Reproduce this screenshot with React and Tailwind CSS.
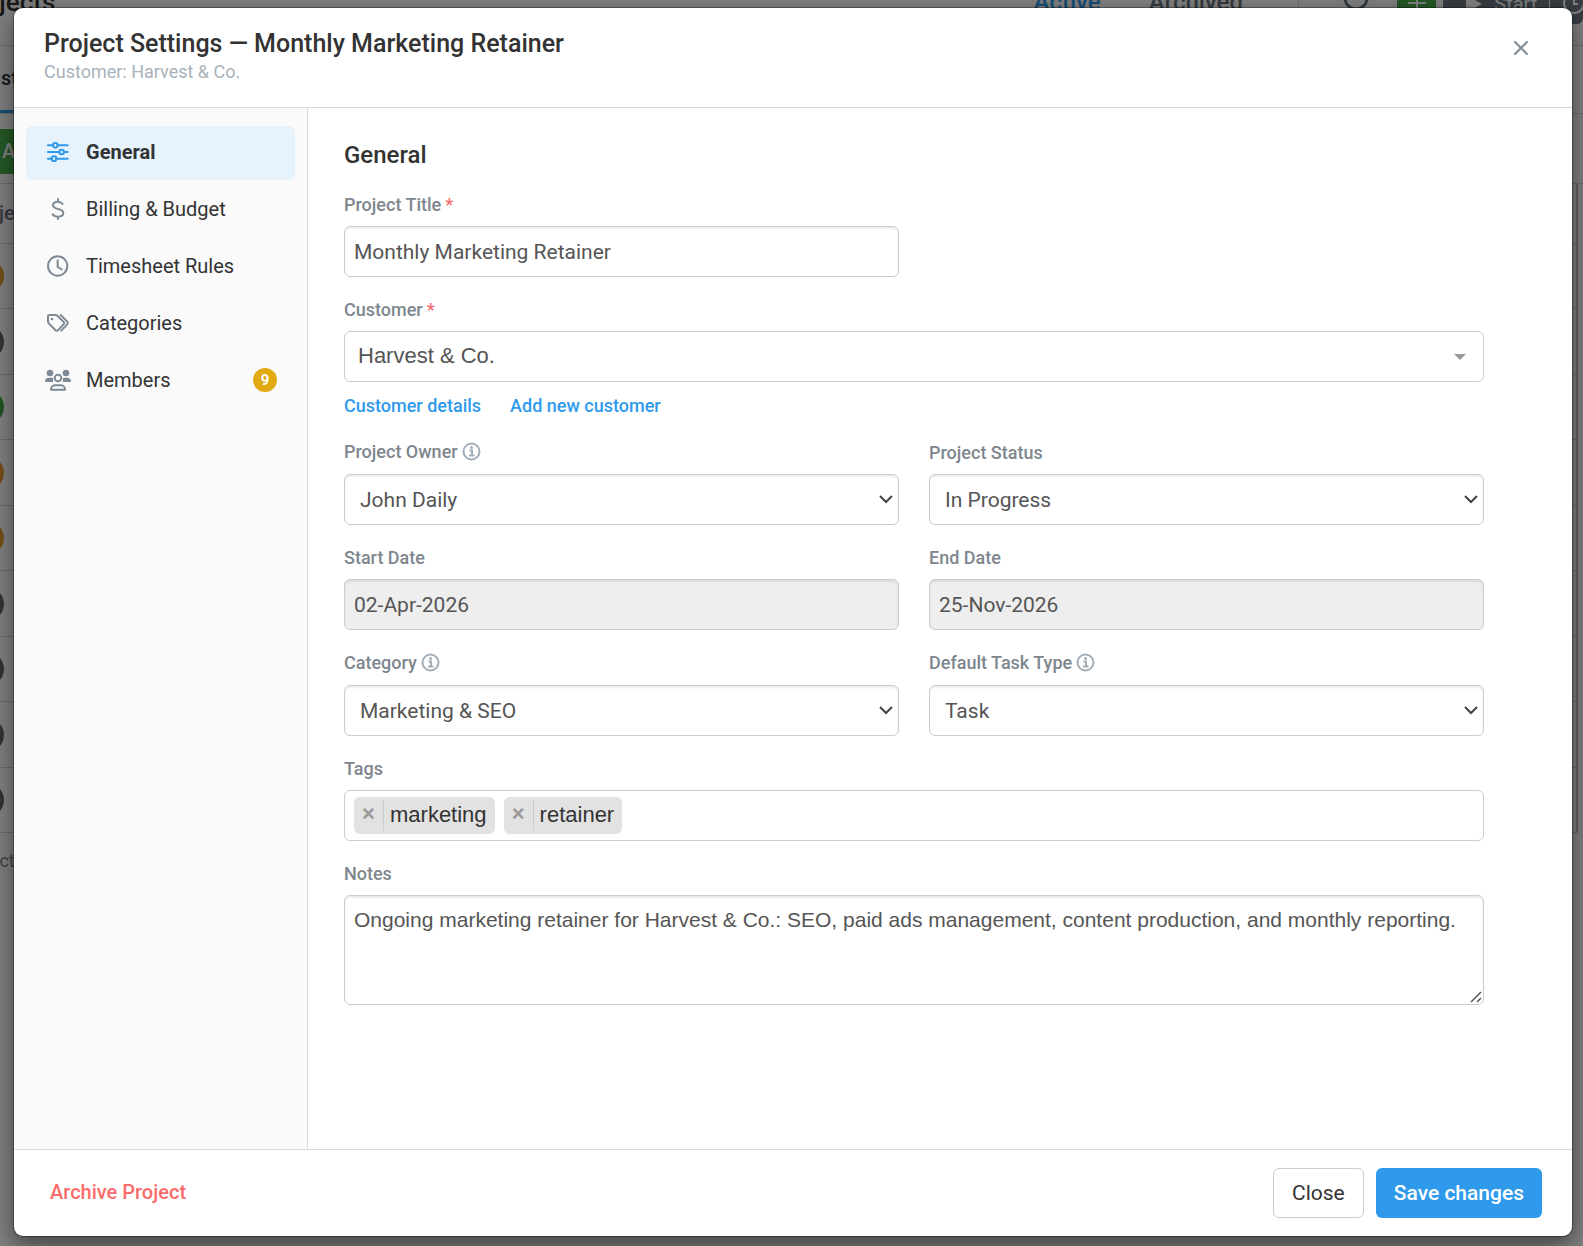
import React from 'react';

const SlidersIcon = () => (
  <svg className="w-[26px] h-[26px]" viewBox="0 0 78 78" fill="none" stroke="currentColor" strokeWidth="6" strokeLinecap="round">
    <path d="M9 19h15M38 19h30M9 39h34M57 39h11M9 59h11M34 59h34" />
    <circle cx="31" cy="19" r="7" />
    <circle cx="50" cy="39" r="7" />
    <circle cx="27" cy="59" r="7" />
  </svg>
);

const DollarIcon = () => (
  <svg className="w-[26px] h-[26px]" viewBox="0 0 78 78" fill="none" stroke="currentColor" strokeWidth="6" strokeLinecap="round">
    <path d="M39 9v8M39 62v7M53 24c-3-4-8-7-14-7-8 0-15 4-15 11 0 7 7 9 15 11 9 2 16 5 16 12s-7 11-16 11c-7 0-13-3-16-7" />
  </svg>
);

const ClockIcon = () => (
  <svg className="w-[26px] h-[26px]" viewBox="0 0 78 78" fill="none" stroke="currentColor" strokeWidth="6" strokeLinecap="round" strokeLinejoin="round">
    <circle cx="38" cy="39" r="29" />
    <path d="M38 22v20l12 7" />
  </svg>
);

const TagsIcon = () => (
  <svg className="w-[26px] h-[26px]" viewBox="0 0 78 78" fill="none" stroke="currentColor" strokeWidth="6" strokeLinecap="round" strokeLinejoin="round">
    <path d="M13 15h18c3 0 5 1 7 3l17 17c3 3 3 6 0 9L40 60c-3 3-6 3-9 0L12 41c-2-2-3-4-3-7V19c0-2 2-4 4-4z" />
    <path d="M47 15l19 19c3 3 3 7 0 10L49 62" />
    <circle cx="21" cy="27" r="4" fill="currentColor" stroke="none" />
  </svg>
);

const MembersIcon = () => (
  <svg className="w-[26px] h-[26px]" viewBox="0 0 78 78" fill="currentColor">
    <circle cx="15" cy="18" r="10" />
    <circle cx="63" cy="18" r="10" />
    <path d="M0 43c0-7 5-11 11-11h8c2 0 4 1 6 2-2 3-1 7 0 11H2c-1 0-2-1-2-2zM78 43c0-7-5-11-11-11h-8c-2 0-4 1-6 2 2 3 1 7 0 11h23c1 0 2-1 2-2z" />
    <circle cx="39" cy="33" r="10" fill="none" stroke="currentColor" strokeWidth="6" />
    <path d="M18 68c0-8 6-13 13-13h16c7 0 13 5 13 13z" fill="none" stroke="currentColor" strokeWidth="6" strokeLinejoin="round" />
  </svg>
);

const InfoIcon = () => (
  <svg className="w-[19px] h-[19px] text-[#a3adb7]" viewBox="0 0 38 38" fill="none" stroke="currentColor" strokeWidth="4">
    <circle cx="19" cy="19" r="16" />
    <path d="M15 17h5v9M14 27h11" />
    <circle cx="19" cy="11" r="3" fill="currentColor" stroke="none" />
  </svg>
);

const navItems = [
  { label: 'General', icon: <SlidersIcon />, active: true },
  { label: 'Billing & Budget', icon: <DollarIcon /> },
  { label: 'Timesheet Rules', icon: <ClockIcon /> },
  { label: 'Categories', icon: <TagsIcon /> },
  { label: 'Members', icon: <MembersIcon />, count: 9 },
];

const rows = ['bg-[#e69a2e]', 'bg-[#666666]', 'bg-[#3fa845]', 'bg-[#e69a2e]', 'bg-[#e69a2e]', 'bg-[#666666]', 'bg-[#666666]', 'bg-[#666666]', 'bg-[#666666]'];

const box = 'w-full h-[51px] rounded-md border border-[#cccccc] text-[#555555] outline-none';
const inset = 'shadow-[inset_0_2px_2px_rgba(0,0,0,0.075)]';

const Field = ({ id, label, required, info, children }) => (
  <div>
    <label htmlFor={id} className={`flex items-center gap-1 mb-[10px] text-[18px] font-medium text-[#7e868e] ${info ? 'h-[25px]' : 'h-6'}`}>
      {label}
      {required && <span className="text-[#fa6b6b]">*</span>}
      {info && <InfoIcon />}
    </label>
    {children}
  </div>
);

const SelectField = ({ id, label, info, value }) => (
  <Field id={id} label={label} info={info}>
    <div className="relative">
      <select id={id} defaultValue={value} className={`${box} ${inset} appearance-none bg-white pt-[2px] pl-[15px] pr-8 text-[21px]`}>
        <option>{value}</option>
      </select>
      <svg className="absolute right-[6px] top-[21px] w-[14px] h-[9px] pointer-events-none" viewBox="0 0 14 9" fill="none" stroke="#444444" strokeWidth="2">
        <path d="M1 1l6 6 6-6" />
      </svg>
    </div>
  </Field>
);

// The projects list that stays visible around the edges of the dialog
const ProjectsPage = () => (
  <div className="-ml-[60px] text-[#333333]" aria-hidden="true">
    <div className="flex justify-between h-[46px] overflow-hidden border-b border-[#d5d8dc]">
      <div className="pl-[19px] -mt-[16px] text-[26px] leading-[36px] font-medium">Projects</div>
      <div className="flex items-start text-[24px] leading-[36px] font-medium">
        <span className="-mt-[16px] text-[#2f9aeb]">Active</span>
        <span className="-mt-[16px] ml-[48px] text-[#6b7580]">Archived</span>
        <span className="ml-[55px] w-px h-full bg-[#d5d8dc]" />
        <svg className="-mt-[15px] ml-[44px] w-[26px] h-[26px]" viewBox="0 0 26 26" fill="none" stroke="#6b7580" strokeWidth="3">
          <circle cx="13" cy="13" r="11" />
        </svg>
        <span className="-mt-[16px] ml-[28px] w-[39px] h-[40px] rounded-md bg-[#46b04a] text-white flex items-center justify-center">
          <svg className="w-[18px] h-[18px]" viewBox="0 0 18 18" stroke="currentColor" strokeWidth="2"><path d="M9 0v18M0 8h18" /></svg>
        </span>
        <span className="-mt-[16px] ml-[7px] h-[40px] w-[140px] rounded-md bg-[#6c7883] text-white flex items-center justify-between">
          <svg className="ml-[23px] w-[17px] h-[18px]" viewBox="0 0 17 18" fill="currentColor"><path d="M0 0l16 9-16 9z" /></svg>
          <span className="text-[20px] font-normal">Start</span>
          <span className="w-px h-full bg-white" />
          <svg className="w-[22px] h-[22px]" viewBox="0 0 22 22" fill="none" stroke="currentColor" strokeWidth="2"><circle cx="13" cy="10" r="10" /><path d="M13 5v6h4" /></svg>
        </span>
      </div>
    </div>
    <div className="h-[68px] border-b border-[#d5d8dc]">
      <div className="w-[78px] h-full border-b-3 border-[#2f9aeb] pt-[17px] text-right text-[20px] font-medium">List</div>
    </div>
    <div className="h-[70px] pt-[15px] border-b border-[#d5d8dc]">
      <div className="w-[120px] h-[45px] rounded-md bg-[#46b04a] pl-[62px] leading-[44px] text-[20px] font-medium text-white">Add</div>
    </div>
    <div className="mr-[5px] border-r-2 border-[#c8c8c8]">
      <div className="h-[60px] pl-[28px] leading-[58px] border-b border-[#d5d8dc] text-[20px] font-medium text-[#6b7580]">Project</div>
      {rows.map((color, index) => (
        <div key={index} className="h-[65px] odd:h-[66px] pl-[30px] flex items-center border-b border-[#d5d8dc]">
          <div className={`w-[34px] h-[34px] rounded-full ${color}`} />
        </div>
      ))}
    </div>
    <div className="pt-[14px] pl-[18px] text-[18px] text-[#7e868e]">Project</div>
  </div>
);

const App = () => {
  return (
    <div className="relative min-h-screen overflow-hidden bg-white font-[Roboto,sans-serif]">
      <div className="absolute inset-0 overflow-hidden">
        <ProjectsPage />
      </div>

      <div className="relative flex min-h-screen bg-black/50 pt-2 pb-[10px] pl-[14px] pr-[11px]">
        <div role="dialog" aria-labelledby="dialog-title" className="flex-1 flex flex-col rounded-[9px] bg-white overflow-hidden shadow-[0_0_0_1px_rgba(0,0,0,0.3),0_8px_22px_rgba(0,0,0,0.5)]">
          <header className="flex items-start justify-between h-[100px] border-b border-[#d8dbde] pl-[30px] pr-[39px] pt-5">
            <div>
              <h1 id="dialog-title" className="text-[25px] leading-[31px] font-medium text-[#333333]">Project Settings — Monthly Marketing Retainer</h1>
              <p className="text-[18px] leading-[25px] text-[#a8b2bb]">Customer: Harvest &amp; Co.</p>
            </div>
            <button type="button" aria-label="Close dialog" className="p-1 mt-2 text-[#7e8a95]">
              <svg className="w-[16px] h-[16px]" viewBox="0 0 16 16" stroke="currentColor" strokeWidth="2" strokeLinecap="round">
                <path d="M2 2l12 12M14 2L2 14" />
              </svg>
            </button>
          </header>

          <div className="flex flex-1">
            <nav className="w-[294px] shrink-0 flex flex-col gap-[3px] bg-[#fafafa] border-r border-[#d8dbde] px-3 pt-[18px]">
              {navItems.map((item) => (
                <a key={item.label} href="#" className={`flex items-center h-[54px] rounded-md pl-[19px] pr-[18px] pb-[2px] text-[20px] text-[#333333] ${item.active ? 'bg-[#e6f3fd] font-bold' : ''}`}>
                  <span className={item.active ? 'text-[#2f9aeb]' : 'text-[#7e8a95]'}>{item.icon}</span>
                  <span className="ml-[15px] flex-1">{item.label}</span>
                  {item.count && (
                    <span className="w-6 h-6 rounded-full bg-[#e2aa12] text-center text-[15px] leading-6 font-bold text-white">{item.count}</span>
                  )}
                </a>
              ))}
            </nav>

            <main className="flex-1 pl-9 pr-[88px] pt-8 pb-10">
              <h2 className="text-[24px] leading-[30px] font-medium text-[#333333]">General</h2>

              <form className="mt-[22px] flex flex-col gap-5">
                <div className="grid grid-cols-2 gap-x-[30px]">
                  <Field id="title" label="Project Title" required>
                    <input id="title" type="text" defaultValue="Monthly Marketing Retainer" className={`${box} ${inset} bg-white px-[9px] text-[21px]`} />
                  </Field>
                </div>

                <div>
                  <Field id="customer" label="Customer" required>
                    <div className="relative">
                      <select id="customer" className={`${box} appearance-none bg-white pl-[13px] pr-8 pb-[2px] text-[22px] font-[Liberation_Sans,sans-serif]`}>
                        <option>Harvest &amp; Co.</option>
                      </select>
                      <svg className="absolute right-[18px] top-[23px] w-[12px] h-[6px] pointer-events-none" viewBox="0 0 12 6" fill="#999999">
                        <path d="M0 0h12L6 6z" />
                      </svg>
                    </div>
                  </Field>
                  <div className="mt-[10px] flex gap-[29px] text-[18px] leading-[27px] font-medium text-[#2f9aeb]">
                    <a href="#">Customer details</a>
                    <a href="#">Add new customer</a>
                  </div>
                </div>

                <div className="grid grid-cols-2 items-end gap-x-[30px] gap-y-5">
                  <SelectField id="owner" label="Project Owner" info value="John Daily" />
                  <SelectField id="status" label="Project Status" value="In Progress" />
                  <Field id="start" label="Start Date">
                    <input id="start" type="text" readOnly defaultValue="02-Apr-2026" className={`${box} ${inset} bg-[#eeeeee] px-[9px] text-[21px]`} />
                  </Field>
                  <Field id="end" label="End Date">
                    <input id="end" type="text" readOnly defaultValue="25-Nov-2026" className={`${box} ${inset} bg-[#eeeeee] px-[9px] text-[21px]`} />
                  </Field>
                  <SelectField id="category" label="Category" info value="Marketing & SEO" />
                  <SelectField id="task-type" label="Default Task Type" info value="Task" />
                </div>

                <Field id="tags" label="Tags">
                  <div className={`${box} flex items-center gap-[9px] px-[9px] text-[22px] font-[Liberation_Sans,sans-serif]`}>
                    {['marketing', 'retainer'].map((tag) => (
                      <span key={tag} className="flex items-center h-[37px] py-[3px] rounded-md bg-[#e2e2e2] text-[#333333]">
                        <button type="button" aria-label={`Remove ${tag}`} className="w-[30px] h-full border-r border-[#cccccc] pb-1 text-[22px] leading-[27px] font-bold text-[#999999]">×</button>
                        <span className="pl-[6px] pr-2 pb-[2px]">{tag}</span>
                      </span>
                    ))}
                    <input id="tags" type="text" className="flex-1 min-w-0 outline-none" />
                  </div>
                </Field>

                <Field id="notes" label="Notes">
                  <div className="relative">
                    <textarea
                      id="notes"
                      defaultValue="Ongoing marketing retainer for Harvest & Co.: SEO, paid ads management, content production, and monthly reporting."
                      className={`block w-full h-[110px] rounded-md border border-[#cccccc] bg-white px-[9px] py-[9px] text-[21px] leading-[30px] text-[#555555] outline-none resize-none font-[Liberation_Sans,sans-serif] ${inset}`}
                    />
                    <svg className="absolute right-[2px] bottom-[2px] w-[12px] h-[12px] pointer-events-none" viewBox="0 0 12 12" stroke="#555555" strokeWidth="1.5">
                      <path d="M1 11L11 1M7 11l4-4" />
                    </svg>
                  </div>
                </Field>
              </form>
            </main>
          </div>

          <footer className="flex items-center h-[87px] border-t border-[#d8dbde] pl-9 pr-[30px]">
            <button type="button" className="pb-[2px] text-[20px] font-medium text-[#fa6b6b]">Archive Project</button>
            <button type="button" className="ml-auto h-[50px] px-[18px] pt-[2px] rounded-md border border-[#cccccc] bg-white text-[21px] text-[#333333]">Close</button>
            <button type="button" className="ml-3 h-[50px] px-[18px] pt-[2px] rounded-md bg-[#2f9aeb] text-[21px] font-medium text-white">Save changes</button>
          </footer>
        </div>
      </div>
    </div>
  );
};

export default App;
